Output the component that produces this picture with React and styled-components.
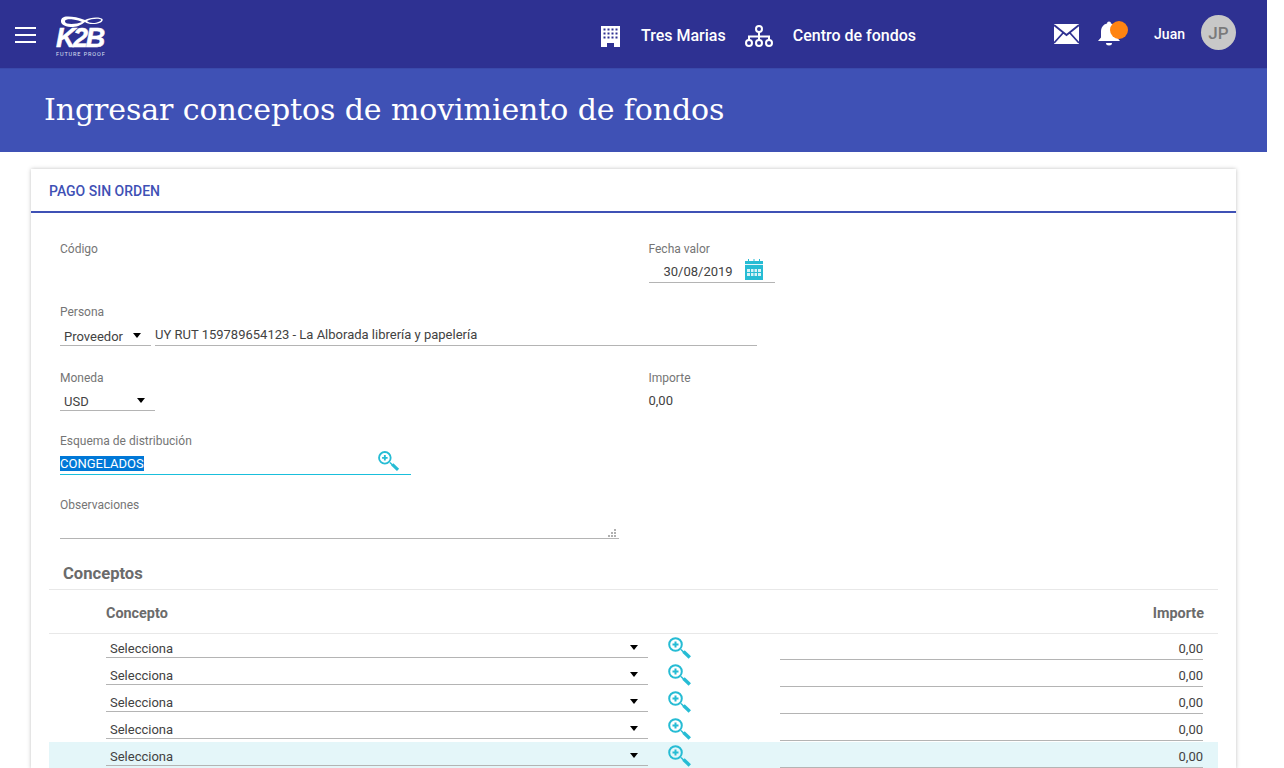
import React from 'react';
import styled, { createGlobalStyle } from 'styled-components';

const GlobalStyle = createGlobalStyle`
  html, body {
    margin: 0;
    padding: 0;
    height: 768px;
    overflow: hidden;
    background: #fff;
    font-family: Roboto, "Liberation Sans", sans-serif;
  }
`;

const Page = styled.div`
  width: 1267px;
  height: 768px;
  overflow: hidden;
  background: #fff;
`;

const TopBar = styled.header`
  height: 68px;
  background: #2e3192;
  display: flex;
  align-items: center;
  color: #fff;
  padding: 0 31px 0 15px;
  box-sizing: border-box;
`;

const Burger = styled.div`
  width: 21px;
  display: flex;
  flex-direction: column;
  gap: 5px;
  margin-right: 20px;
  margin-top: 2px;

  span {
    display: block;
    height: 2px;
    background: #fff;
  }
`;

const LogoBox = styled.div`
  width: 50px;
  height: 42px;
  position: relative;
  margin-top: 2px;
`;

const LogoMark = styled.svg`
  display: block;
`;

const LogoText = styled.div`
  position: absolute;
  left: 0;
  top: 12px;
  font: italic 700 27px/24px "Liberation Sans", sans-serif;
  letter-spacing: -2.4px;
  -webkit-text-stroke: 0.5px #fff;
  color: #fff;
`;

const LogoTag = styled.div`
  position: absolute;
  left: 0;
  top: 37px;
  font: 400 5.5px/6px Roboto, sans-serif;
  letter-spacing: 0.9px;
  white-space: nowrap;
  color: #dfe0f2;
`;

const TopCenter = styled.div`
  display: flex;
  align-items: center;
  margin-left: 495px;
  margin-top: 2px;
`;

const TopIcon = styled.span`
  display: flex;
  margin-top: 2px;
`;

const TopLink = styled.span`
  font-size: 16px;
  font-weight: 500;
  margin-left: ${(p) => p.$left}px;
  margin-right: ${(p) => p.$right || 0}px;
`;

const TopRight = styled.div`
  display: flex;
  align-items: center;
  margin-left: auto;
`;

const Bell = styled.div`
  position: relative;
  width: 24px;
  height: 30px;
  margin-left: 18px;
`;

const BellDot = styled.span`
  position: absolute;
  left: 13px;
  top: 2px;
  width: 18px;
  height: 18px;
  border-radius: 50%;
  background: #ff8412;
`;

const UserName = styled.span`
  font-size: 14px;
  font-weight: 500;
  margin-left: 33px;
`;

const Avatar = styled.div`
  width: 35px;
  height: 35px;
  border-radius: 50%;
  background: #c8c8c8;
  color: #7a7a7a;
  font-size: 17px;
  font-weight: 500;
  display: flex;
  align-items: center;
  justify-content: center;
  margin: 0 0 3px 16px;
`;

const TitleBand = styled.div`
  height: 84px;
  background: #3f51b5;
  display: flex;
  align-items: center;
  padding: 0 0 2px 44px;
  border-top: 1px solid #3a4aab;
  box-sizing: border-box;
`;

const Title = styled.h1`
  margin: 0;
  font: 400 30px/1 "DejaVu Serif", serif;
  letter-spacing: -0.1px;
  color: #fff;
`;

const Card = styled.section`
  margin: 17px 31px 0;
  background: #fff;
  box-shadow: 0 0 4px rgba(0, 0, 0, 0.25);
`;

const CardHeader = styled.div`
  height: 44px;
  box-sizing: border-box;
  border-bottom: 2px solid #3f51b5;
  padding: 2px 0 0 18px;
  display: flex;
  align-items: center;
  font-size: 14px;
  font-weight: 500;
  color: #3f51b5;
`;

const Form = styled.div`
  padding: 28px 0 0 29px;
`;

const FormRow = styled.div`
  height: ${(p) => p.$height}px;
  display: grid;
  grid-template-columns: 588.5px 1fr;
`;

const Field = styled.div`
  display: flex;
  flex-direction: column;
  align-items: flex-start;
`;

const Label = styled.label`
  font-size: 12px;
  line-height: 16px;
  color: #757575;
`;

const Inline = styled.div`
  display: flex;
  gap: 4px;
  margin-top: ${(p) => p.$top || 0}px;
`;

const Underlined = styled.div`
  width: ${(p) => p.$width}px;
  height: ${(p) => p.$height || 24}px;
  box-sizing: border-box;
  border-bottom: 1px solid ${(p) => (p.$focus ? '#19bfdc' : '#b4b4b4')};
  display: flex;
  align-items: center;
  justify-content: ${(p) => (p.$right ? 'flex-end' : 'space-between')};
  padding: ${(p) => p.$pad || '0'};
  font-size: 13px;
  color: #424242;
  position: relative;
`;

const Caret = styled.span`
  width: 0;
  height: 0;
  margin-top: -2px;
  border-left: 4px solid transparent;
  border-right: 4px solid transparent;
  border-top: 5px solid #000;
`;

const DateText = styled.span`
  margin-top: 4px;
`;

const CalendarSlot = styled.span`
  display: flex;
  margin-right: 12px;
`;

const Selected = styled.span`
  background: #0078d7;
  color: #fff;
  line-height: 15px;
  margin-top: 4px;
`;

const Plain = styled.div`
  font-size: 13px;
  color: #424242;
  margin-top: ${(p) => p.$top || 0}px;
`;

const Grip = styled.svg`
  position: absolute;
  right: 3px;
  bottom: 1px;
`;

const SectionTitle = styled.h2`
  margin: 0 18px;
  height: 43px;
  box-sizing: border-box;
  padding: 17px 0 0 14px;
  font-size: 16.6px;
  line-height: 20px;
  font-weight: 700;
  color: #6b6b6b;
  border-bottom: 1px solid #e8e8e8;
`;

const Table = styled.div`
  margin: 0 18px;
`;

const HeadRow = styled.div`
  height: 44px;
  box-sizing: border-box;
  border-bottom: 1px solid #e8e8e8;
  display: flex;
  align-items: center;
  justify-content: space-between;
  padding: 3px 14px 0 57px;
  font-size: 14.4px;
  font-weight: 700;
  color: #6b6b6b;
`;

const Row = styled.div`
  height: 27px;
  display: flex;
  align-items: flex-start;
  padding-left: 57px;
  background: ${(p) => (p.$active ? '#e4f6f9' : 'transparent')};
`;

const IconWrap = styled.span`
  display: flex;
  margin: 2px 87px 0 19px;
`;

const ZoomIcon = ({ size = 26 }) => (
  <svg width={size} height={size} viewBox="0 0 26 26" fill="none" stroke="#26bcd4">
    <circle cx="8.5" cy="8.5" r="6.3" strokeWidth="2" />
    <path d="M8.500 5.500v6M5.500 8.500h6" strokeWidth="2" />
    <path d="M14 13.500l3 3" strokeWidth="1.5" />
    <path d="M16.500 15.500l6.300 6" strokeWidth="3.400" />
  </svg>
);

const BuildingIcon = () => (
  <svg width="19" height="21" viewBox="0 0 19 21" fill="#fff">
    <path d="M0 0h19v21h-6v-4H6v4H0z" />
    <g fill="#2e3192">
      {[3, 7, 11, 15].map((x) =>
        [3, 7, 11].map((y) => <rect key={x + '-' + y} x={x - 0.5} y={y - 0.5} width="2" height="2" />)
      )}
    </g>
  </svg>
);

const OrgIcon = () => (
  <svg width="28" height="22" viewBox="0 0 28 22" fill="none" stroke="#fff" strokeWidth="2">
    <circle cx="14" cy="4" r="3" />
    <circle cx="4" cy="18" r="3" />
    <circle cx="14" cy="18" r="3" />
    <circle cx="24" cy="18" r="3" />
    <path d="M14 7v8M4 15v-3.500h20V15" />
  </svg>
);

const MailIcon = () => (
  <svg width="25" height="20" viewBox="0 0 25 20">
    <rect width="25" height="20" fill="#fff" />
    <path d="M0 1l12.500 10L25 1M0 19l9-10M25 19L16 9" fill="none" stroke="#2e3192" strokeWidth="1.800" />
  </svg>
);

const BellIcon = () => (
  <svg width="24" height="30" viewBox="0 0 24 30" fill="#fff">
    <path d="M10 4.500a2 2 0 0 1 4 0c4 1 6 4 6 8v6l3 3.500H1l3-3.500v-6c0-4 2-7 6-8z" />
    <path d="M9 24h6a3 2.500 0 0 1-6 0z" />
  </svg>
);

const CalendarIcon = () => (
  <svg width="18" height="21" viewBox="0 0 18 21">
    <rect y="2" width="18" height="19" fill="#26bcd4" />
    <path d="M3 0h1v4H3zM8.500 0h1v4h-1zM14 0h1v4h-1z" fill="#26bcd4" />
    <rect y="5" width="18" height="1" fill="#e4f6f9" />
    <rect x="2" y="10" width="14" height="7" fill="#d7f3f7" />
    <path d="M5.500 10v7M9 10v7M12.500 10v7M2 13.500h14" stroke="#26bcd4" />
  </svg>
);

const GripIcon = () => (
  <Grip width="8" height="8" viewBox="0 0 8 8" fill="#b0b0b0">
    <rect x="6" y="0" width="2" height="2" />
    <rect x="3" y="3" width="2" height="2" />
    <rect x="6" y="3" width="2" height="2" />
    <rect x="0" y="6" width="2" height="2" />
    <rect x="3" y="6" width="2" height="2" />
    <rect x="6" y="6" width="2" height="2" />
  </Grip>
);

const K2BLogo = () => (
  <LogoBox>
    <LogoMark width="50" height="14" viewBox="0 0 50 14">
      <path
        fillRule="evenodd"
        d="M29 6C22 3 14 2 10 2.500 6 3 5 5 5 7.500 5 11 10 13 17 13c5 0 9-3 12-5 2 1.500 4 2 8 2 5 0 11-2 9.500-5-2-2.500-13-2-17.500 1zM9 7c0-1.500 4-2 8-1.500s7 1.500 9 2.500c-4 1.800-11 2.500-15 1.500C9.500 9 9 8 9 7zm22 0c4-2.500 12-3 14-1.500 1 1.500-4 3.500-8 3.500-3 0-5-.7-6-2z"
        fill="#fff"
      />
    </LogoMark>
    <LogoText>K2B</LogoText>
    <LogoTag>FUTURE PROOF</LogoTag>
  </LogoBox>
);

const App = () => {
  const rows = [false, false, false, false, true];

  return (
    <Page>
      <GlobalStyle />
      <TopBar>
        <Burger>
          <span />
          <span />
          <span />
        </Burger>
        <K2BLogo />
        <TopCenter>
          <TopIcon>
            <BuildingIcon />
          </TopIcon>
          <TopLink $left={21} $right={19}>Tres Marias</TopLink>
          <TopIcon>
            <OrgIcon />
          </TopIcon>
          <TopLink $left={20}>Centro de fondos</TopLink>
        </TopCenter>
        <TopRight>
          <MailIcon />
          <Bell>
            <BellIcon />
            <BellDot />
          </Bell>
          <UserName>Juan</UserName>
          <Avatar>JP</Avatar>
        </TopRight>
      </TopBar>
      <TitleBand>
        <Title>Ingresar conceptos de movimiento de fondos</Title>
      </TitleBand>
      <Card>
        <CardHeader>PAGO SIN ORDEN</CardHeader>
        <Form>
          <FormRow $height={63}>
            <Field>
              <Label>Código</Label>
            </Field>
            <Field>
              <Label>Fecha valor</Label>
              <Underlined $width={126} $height={26} $pad="0 0 0 15px">
                <DateText>30/08/2019</DateText>
                <CalendarSlot>
                  <CalendarIcon />
                </CalendarSlot>
              </Underlined>
            </Field>
          </FormRow>
          <FormRow $height={66}>
            <Field>
              <Label>Persona</Label>
              <Inline $top={1}>
                <Underlined $width={91} $height={25} $pad="6px 10px 0 4px">
                  Proveedor
                  <Caret />
                </Underlined>
                <Underlined $width={602} $height={25} $pad="2px 0 0 0">
                  UY RUT 159789654123 - La Alborada librería y papelería
                </Underlined>
              </Inline>
            </Field>
            <Field>
              <span />
            </Field>
          </FormRow>
          <FormRow $height={63}>
            <Field>
              <Label>Moneda</Label>
              <Inline $top={0}>
                <Underlined $width={95} $height={25} $pad="6px 10px 0 4px">
                  USD
                  <Caret />
                </Underlined>
              </Inline>
            </Field>
            <Field>
              <Label>Importe</Label>
              <Plain $top={7}>0,00</Plain>
            </Field>
          </FormRow>
          <FormRow $height={64}>
            <Field>
              <Label>Esquema de distribución</Label>
              <Underlined $width={351} $height={26} $focus $pad="0 10px 0 0">
                <Selected>CONGELADOS</Selected>
                <ZoomIcon size={24} />
              </Underlined>
            </Field>
          </FormRow>
          <FormRow $height={50}>
            <Field>
              <Label>Observaciones</Label>
              <Underlined $width={559} $height={26}>
                <GripIcon />
              </Underlined>
            </Field>
          </FormRow>
        </Form>
        <SectionTitle>Conceptos</SectionTitle>
        <Table>
          <HeadRow>
            <span>Concepto</span>
            <span>Importe</span>
          </HeadRow>
          {rows.map((active, i) => (
            <Row key={i} $active={active}>
              <Underlined $width={542} $height={24} $pad="6px 10px 0 4px">
                Selecciona
                <Caret />
              </Underlined>
              <IconWrap>
                <ZoomIcon />
              </IconWrap>
              <Underlined $width={423} $height={26} $right $pad="4px 0 0 0">
                0,00
              </Underlined>
            </Row>
          ))}
        </Table>
      </Card>
    </Page>
  );
};

export default App;
